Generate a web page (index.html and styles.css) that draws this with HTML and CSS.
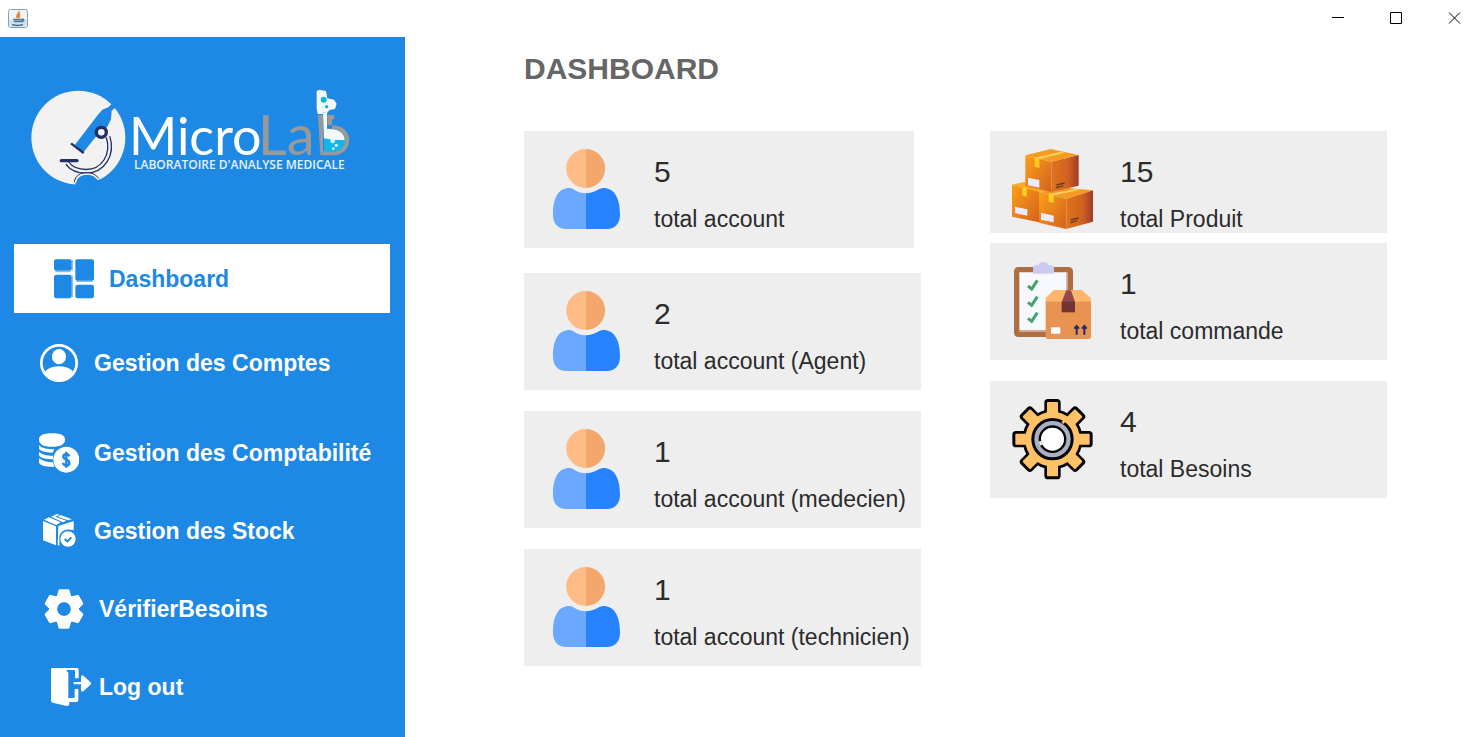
FILE: index.html
```html
<!DOCTYPE html>
<html lang="fr">
<head>
<meta charset="utf-8">
<title>MicroLab</title>
<link rel="stylesheet" href="styles.css">
</head>
<body>
<svg class="defs" aria-hidden="true">
  <defs>
    <linearGradient id="box-left" x1="0" y1="0" x2="1" y2="1"><stop offset="0" stop-color="#fca01a"/><stop offset="1" stop-color="#d4621c"/></linearGradient>
    <linearGradient id="box-right" x1="0" y1="0" x2="1" y2="0"><stop offset="0" stop-color="#de731c"/><stop offset=".6" stop-color="#d2611f"/><stop offset="1" stop-color="#a03c28"/></linearGradient>
    <symbol id="person" viewBox="78 87 243 243">
      <path fill="#ffbb85" d="M197 87a58 58 0 0 0 0 117z"/>
      <path fill="#f3a76c" d="M197 87a58 58 0 0 1 0 117z"/>
      <path fill="#6ba8ff" d="M197 220c-25 0-36-16-49-16-31 0-49 27-49 79 0 28 14 44 40 44h58z"/>
      <path fill="#2782ff" d="M197 220c25 0 40-16 53-16 31 0 50 27 50 79 0 28-14 44-40 44h-63z"/>
    </symbol>
  </defs>
</svg>

<header class="titlebar">
  <svg class="titlebar__app" viewBox="0 0 20 20" role="img" aria-label="Java">
    <rect x=".5" y=".5" width="19" height="18" rx="2" fill="#f1f5f8" stroke="#87a2b5"/>
    <path d="M1 11h18v7H1z" fill="#d3e2eb"/>
    <path d="M10.500 2.500c2 2-3 3-1 6.500M12 5c-2 2-1 2-1 4" fill="none" stroke="#ed8330" stroke-width="2"/>
    <path d="M5 10.500h9M6 12.500h7M4 15.500c3 1 8 1 11 0M14 10.500c3-1 2 2-1 2" fill="none" stroke="#4a7596" stroke-width="1.500"/>
  </svg>
  <div class="titlebar__controls">
    <button class="win-btn" type="button" aria-label="Minimize"><svg viewBox="0 0 13 13"><path d="M0 5.500h12"/></svg></button>
    <button class="win-btn" type="button" aria-label="Maximize"><svg viewBox="0 0 13 13"><path d="M.5.5h11v11H.5z"/></svg></button>
    <button class="win-btn" type="button" aria-label="Close"><svg viewBox="0 0 13 13"><path d="M1 .5l11 11M12 .5l-11 11"/></svg></button>
  </div>
</header>

<div class="layout">
  <aside class="sidebar">
    <svg class="logo" viewBox="0 0 320 100" role="img" aria-label="MicroLab Laboratoire d'analyse medicale">
      <g transform="scale(.33333) translate(-30 -24)">
        <circle cx="175" cy="173" r="141" fill="#f2f2f2"/>
        <path fill="#1e88e5" d="M165 194l70-91 12-14 18-7 12-12 12 10-14 12-2 26-12 24-22 14-50 62z"/>
        <circle cx="244" cy="157" r="15" fill="#f2f2f2" stroke="#252f63" stroke-width="10"/>
        <path fill="none" stroke="#252f63" stroke-width="15" d="M264 170c17 54-14 104-66 104-26 0-44-8-56-24"/>
        <path fill="none" stroke="#f2f2f2" stroke-width="7" d="M264 169c17 55-14 105-66 105-26 0-44-8-56-25"/>
        <path fill="#1e88e5" d="M166 318c0-22 15-34 35-34 16 0 27 8 37 20l-10 14-30 8z"/>
        <path fill="none" stroke="#252f63" stroke-width="3" d="M163 307c2-20 18-29 38-29 17 0 28 7 36 18"/>
        <path fill="none" stroke="#f2f2f2" stroke-width="3" d="M167 309c2-18 15-27 34-27 15 0 25 7 33 17"/>
        <path fill="none" stroke="#252f63" stroke-width="7" d="M153 190l38 29"/>
        <path fill="none" stroke="#252f63" stroke-width="10" stroke-linecap="round" d="M124 242h47"/>
      </g>
      <text class="logo__name" x="99" y="67">Micro</text>
      <text class="logo__name logo__name--lab" x="228" y="67">La</text>
      <g transform="scale(.33333) translate(480 -24)">
        <path fill="#f3f8fa" d="M380 33l8-4 20 4 4 22 20 4 8 12-5 16-17 3-9 12h-26l-3-18z"/>
        <path fill="#999" d="M384 105h15v120h-8zM412 105h21v13h-7v17h-14z"/>
        <path fill="none" stroke="#999" stroke-width="13" d="M426 142c28 0 45 15 45 38s-17 39-40 39h-35"/>
        <path fill="#f3f8fa" d="M399 94h12v52c31 0 53 10 53 35h-62z"/>
        <path fill="#12b5e9" d="M402 175l25 4 38 2c-2 23-15 34-34 34h-29z"/>
        <g fill="#15b3df"><circle cx="401" cy="59" r="9"/><circle cx="410" cy="80" r="5"/><circle cx="401" cy="97" r="2"/></g>
        <g fill="#dff6fc"><circle cx="428" cy="183" r="7"/><circle cx="439" cy="196" r="5"/><circle cx="430" cy="206" r="4"/></g>
      </g>
      <text class="logo__tag" x="104" y="81">LABORATOIRE D'ANALYSE MEDICALE</text>
    </svg>

    <nav class="nav">
      <a class="nav__item nav__item--active" href="#dashboard" aria-current="page">
        <svg class="nav__icon" viewBox="132 56 120 120"><rect x="132" y="57" width="53" height="34" rx="6"/><rect x="132" y="103" width="53" height="71" rx="7"/><rect x="196" y="57" width="56" height="64" rx="6"/><rect x="196" y="133" width="56" height="41" rx="7"/><path opacity=".55" d="M185 60h4v30h-4zM185 106h4v64h-4zM136 92h46v4h-46zM200 121h48v4h-48z"/></svg>
        Dashboard
      </a>
      <a class="nav__item nav__item--accounts" href="#comptes">
        <svg class="nav__icon" viewBox="87 309 120 120"><circle cx="147" cy="369" r="53" fill="none" stroke="currentColor" stroke-width="8"/><ellipse cx="147" cy="350" rx="21" ry="23"/><path d="M105 394c10-10 25-15 42-15s32 5 42 15c-6 19-24 30-42 30s-36-11-42-30z"/></svg>
        Gestion des Comptes
      </a>
      <a class="nav__item" href="#comptabilite">
        <svg class="nav__icon" viewBox="57 28 120 120"><path d="M57 48c0-13 12-19 39-19s39 6 39 19-12 21-39 21-39-8-39-21zM57 65c10 9 24 12 46 12l-5 10c-20 0-41-5-41-13zM57 84c10 9 23 12 42 12v11c-20 0-42-5-42-13zM57 104c11 8 24 12 42 12l4 14c-22 1-46-5-46-14z"/><circle cx="139" cy="108" r="39"/><path class="knock" stroke-width="7" d="M148 98c-3-9-18-8-18 1 0 10 18 7 18 18 0 11-17 11-19 0M139 84v48"/></svg>
        Gestion des Comptabilité
      </a>
      <a class="nav__item" href="#stock">
        <svg class="nav__icon" viewBox="57 261 120 120"><path d="M69 291l39 16v57l-39-15zM72 287l15-7 35 15-13 8zM93 278l17-8 9 2-13 6 33 12-10 5zM122 273l34 13-12 3-31-11zM115 306l46-15v28c-17-6-36-2-43 16v30l-5-2z"/><circle cx="144" cy="345" r="23"/><path class="knock" stroke-width="6" d="M134 345l8 7 12-12"/></svg>
        Gestion des Stock
      </a>
      <a class="nav__item nav__item--inset" href="#besoins">
        <svg class="nav__icon" viewBox="42 28 120 120"><path id="tooth" d="M80 52l5-19q1-4 5-4h24q4 0 5 4l5 19v16H80z"/><use href="#tooth" transform="rotate(60 102 88)"/><use href="#tooth" transform="rotate(120 102 88)"/><use href="#tooth" transform="rotate(180 102 88)"/><use href="#tooth" transform="rotate(240 102 88)"/><use href="#tooth" transform="rotate(300 102 88)"/><circle cx="102" cy="88" r="32" fill="none" stroke="currentColor" stroke-width="24"/><circle class="hole" cx="102" cy="88" r="20"/></svg>
        VérifierBesoins
      </a>
      <a class="nav__item nav__item--inset nav__item--logout" href="#logout">
        <svg class="nav__icon nav__icon--wide" viewBox="42 249 144 144"><path d="M63 268q0-4 5-4h73q5 0 5 5v26h-11v-22q0-3-3-3h-24l7 8v76h15q4 0 4-4v-23h11v34q0 5-5 5h-22v7q0 5-8 5l-42-10q-5-1-5-6zM131 306h22v-16q2-7 8-2l22 20v5l-22 20q-6 5-8-2v-18h-22z"/></svg>
        Log out
      </a>
    </nav>
  </aside>

  <main class="content">
    <h1 class="content__title">DASHBOARD</h1>
    <div class="board">
      <section class="board__col">
        <article class="card card--first"><svg class="card__icon"><use href="#person"/></svg><div class="card__text"><p class="card__value">5</p><p class="card__label">total account</p></div></article>
        <article class="card"><svg class="card__icon"><use href="#person"/></svg><div class="card__text"><p class="card__value">2</p><p class="card__label">total account (Agent)</p></div></article>
        <article class="card"><svg class="card__icon"><use href="#person"/></svg><div class="card__text"><p class="card__value">1</p><p class="card__label">total account (medecien)</p></div></article>
        <article class="card"><svg class="card__icon"><use href="#person"/></svg><div class="card__text"><p class="card__value">1</p><p class="card__label">total account (technicien)</p></div></article>
      </section>
      <section class="board__col">
        <article class="card card--short">
          <svg class="card__icon" viewBox="66 57 243 243">
            <path fill="url(#box-left)" d="M66 164l81 20v93l-81-17z"/>
            <path fill="#fba928" d="M66 164l36-8 85 22-40 8z"/>
            <path fill="url(#box-left)" d="M147 186l82 20v91l-82-19z"/>
            <path fill="url(#box-right)" d="M229 206l80-25v94l-80 22z"/>
            <path fill="#f39a25" d="M147 186l77-13 85 8-80 25z"/>
            <path fill="url(#box-left)" d="M106 76l78 19v91l-78-18z"/>
            <path fill="url(#box-right)" d="M184 95l82-20v92l-82 19z"/>
            <path fill="#f49c20" d="M106 76l76-19 84 18-82 20z"/>
            <path fill="#ffcf5b" d="M134 83l79-18 13 3-78 19zM176 192l82-15 13 2-79 17z"/>
            <path fill="#ffcd22" d="M134 83l14 4v27l-14-4zM97 171l13 3v26l-13-4zM176 192l15 4v23l-15-4z"/>
            <path fill="#eeeaff" d="M114 143l34 7v23l-34-7zM75 230l37 8v19l-37-8zM153 248l38 9v20l-38-8z"/>
            <path fill="none" stroke="#663b2b" stroke-width="4" d="M199 165l25-6M198 173l22-6M242 270l24-6M241 278l21-6"/>
          </svg>
          <div class="card__text"><p class="card__value">15</p><p class="card__label">total Produit</p></div>
        </article>
        <article class="card">
          <svg class="card__icon" viewBox="66 63 243 243">
            <rect x="72" y="81" width="177" height="210" rx="13" fill="#ae6e42"/>
            <path fill="#d4a991" d="M88 270h80v6H88zM229 97h5v60h-5z"/>
            <path fill="#f8f9ff" d="M88 97h141v70l-61 20v83H88z"/>
            <path fill="#cacaf2" d="M135 76h10c2-13 28-13 30 0h10q7 0 7 7v18h-63V83q0-7 6-7z"/>
            <path fill="none" stroke="#42a36b" stroke-width="9" d="M114 138l11 9 17-26M114 187l11 9 17-26M114 235l11 9 17-26"/>
            <path fill="#ffb56c" d="M167 186v-12l25-24h83l28 25v11z"/>
            <path fill="#e89351" d="M167 185h136v105q0 7-7 7H174q-7 0-7-7z"/>
            <path fill="#94484b" d="M229 151h14l12 35h-40z"/>
            <path fill="#713334" d="M215 185h40v32h-40z"/>
            <rect x="183" y="262" width="28" height="19" rx="2" fill="#fff"/>
            <path fill="none" stroke="#252a63" stroke-width="6" d="M260 284v-25M283 284v-25M253 266l7-8 7 8M276 266l7-8 7 8"/>
          </svg>
          <div class="card__text"><p class="card__value">1</p><p class="card__label">total commande</p></div>
        </article>
        <article class="card">
          <svg class="card__icon" viewBox="66 57 243 243">
            <defs><g id="cog"><rect id="cog-bar" x="167" y="61" width="41" height="233" rx="7"/><use href="#cog-bar" transform="rotate(45 187.500 177.500)"/><use href="#cog-bar" transform="rotate(90 187.500 177.500)"/><use href="#cog-bar" transform="rotate(135 187.500 177.500)"/><circle cx="187.500" cy="177.500" r="86"/></g></defs>
            <use href="#cog" fill="#060606" stroke="#060606" stroke-width="8"/>
            <g fill="#ffc267"><rect id="cog-in" x="171" y="66" width="33" height="223" rx="3"/><use href="#cog-in" transform="rotate(45 187.500 177.500)"/><use href="#cog-in" transform="rotate(90 187.500 177.500)"/><use href="#cog-in" transform="rotate(135 187.500 177.500)"/><circle cx="187.500" cy="177.500" r="82"/></g>
            <circle cx="187.500" cy="177.500" r="59" fill="#aab0c3" stroke="#060606" stroke-width="9"/>
            <circle cx="187.500" cy="177.500" r="38" fill="#fff" stroke="#060606" stroke-width="7"/>
            <path stroke="#ffc267" stroke-width="8" d="M217 124l6 5"/>
            <path stroke="#fff" stroke-width="7" d="M150 184l3 12"/>
          </svg>
          <div class="card__text"><p class="card__value">4</p><p class="card__label">total Besoins</p></div>
        </article>
      </section>
    </div>
  </main>
</div>
</body>
</html>
```

FILE: styles.css
```css
* { box-sizing: border-box; }

body {
  margin: 0;
  min-height: 100vh;
  display: flex;
  flex-direction: column;
  background: #fff;
  color: #2b2b2b;
  font-family: "Liberation Sans", Arial, sans-serif;
}

.defs { position: absolute; width: 0; height: 0; }

.titlebar {
  display: flex;
  justify-content: space-between;
  align-items: center;
  height: 37px;
  padding-left: 8px;
}
.titlebar__app { width: 20px; height: 20px; }
.titlebar__controls { display: flex; height: 100%; }

.win-btn {
  width: 58px;
  padding: 0;
  border: 0;
  background: none;
  display: flex;
  align-items: center;
  justify-content: center;
}
.win-btn svg { width: 13px; height: 13px; fill: none; stroke: #000; }

.layout { flex: 1; display: flex; }

.sidebar {
  flex: none;
  width: 405px;
  padding: 51px 15px 10px 14px;
  background: #1e88e5;
}

.logo { display: block; width: 320px; height: 100px; margin: 0 0 56px 16px; }
.logo__name { font: 400 52px Lato, sans-serif; fill: #fff; }
.logo__name--lab { font-size: 56px; fill: #999; }
.logo__tag { font: 600 12px "Open Sans", sans-serif; fill: #e4f1fc; }

.nav { display: flex; flex-direction: column; }
.nav__item {
  display: flex;
  align-items: center;
  gap: 15px;
  height: 78px;
  padding-left: 25px;
  color: #fff;
  font-size: 23px;
  font-weight: 700;
  line-height: 26px;
  text-decoration: none;
  white-space: nowrap;
}
.nav__item--active {
  height: 69px;
  margin-bottom: 11px;
  padding-left: 40px;
  background: #fff;
  color: #1e88e5;
}
.nav__item--accounts { margin-bottom: 12px; }
.nav__item--inset { padding-left: 30px; }
.nav__item--logout { gap: 7px; }

.nav__icon { flex: none; width: 40px; height: 40px; fill: currentColor; }
.nav__icon--wide { width: 48px; height: 48px; }
.knock { fill: none; stroke: #1e88e5; }
.hole { fill: #1e88e5; }

.content { flex: 1; min-width: 0; padding: 14px 96px 24px 119px; }
.content__title {
  margin: 0 0 44px;
  color: #666;
  font-size: 30px;
  line-height: 36px;
}

.board {
  display: grid;
  grid-template-columns: 1fr 1fr;
  gap: 69px;
  align-items: start;
}
.board__col { display: flex; flex-direction: column; }

.card {
  display: flex;
  gap: 27px;
  margin-bottom: 21px;
  padding: 18px 0 16px 22px;
  background: #eee;
}
.card--first { margin: 0 7px 25px 0; }
.card--short { margin-bottom: 10px; padding-bottom: 1px; }

.card__icon { flex: none; width: 81px; height: 81px; }
.card__text { padding-top: 6px; white-space: nowrap; }
.card__value { margin: 0 0 17px; font-size: 30px; line-height: 34px; }
.card__label { margin: 0; font-size: 23px; line-height: 26px; }
```
